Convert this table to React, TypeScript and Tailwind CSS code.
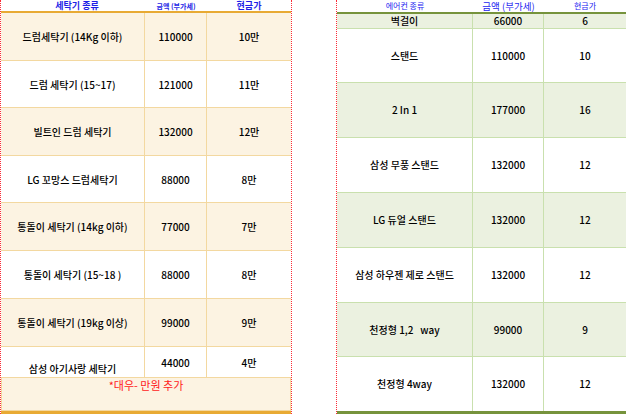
import React from 'react';

const WASHERS = [
  { name: '드럼세탁기 (14Kg 이하)', price: '110000', cash: '10만', h: 'h-[48px]' },
  { name: '드럼 세탁기 (15~17)', price: '121000', cash: '11만', h: 'h-[47px]' },
  { name: '빌트인 드럼 세탁기', price: '132000', cash: '12만', h: 'h-[48px]' },
  { name: 'LG 꼬망스 드럼세탁기', price: '88000', cash: '8만', h: 'h-[47px]' },
  { name: '통돌이 세탁기 (14kg 이하)', price: '77000', cash: '7만', h: 'h-[48px]' },
  { name: '통돌이 세탁기 (15~18 )', price: '88000', cash: '8만', h: 'h-[48px]' },
  { name: '통돌이 세탁기 (19kg 이상)', price: '99000', cash: '9만', h: 'h-[48px]' },
];

const AIRCONS = [
  { name: '벽걸이', price: '66000', cash: '6', h: 'h-[15px]' },
  { name: '스탠드', price: '110000', cash: '10', h: 'h-[54px]' },
  { name: '2 In 1', price: '177000', cash: '16', h: 'h-[55px]' },
  { name: '삼성 무풍 스탠드', price: '132000', cash: '12', h: 'h-[55px]' },
  { name: 'LG 듀얼 스탠드', price: '132000', cash: '12', h: 'h-[55px]' },
  { name: '삼성 하우젠 제로 스탠드', price: '132000', cash: '12', h: 'h-[55px]' },
  { name: '천정형 1,2   way', price: '99000', cash: '9', h: 'h-[54px]' },
  { name: '천정형 4way', price: '132000', cash: '12', h: 'h-[54px]' },
];

const font = { fontFamily: '"Noto Sans CJK KR", "Noto Sans", sans-serif' };

export default function App() {
  return (
    <div className="w-[626px] h-[414px] bg-white overflow-hidden flex text-black" style={font}>
      {/* 세탁기 */}
      <div className="w-[292px] h-full flex flex-col border-x border-dotted border-red-500">
        <div className="h-[11px] grid grid-cols-[144px_62px_1fr] items-end text-[#1f1fe6] font-bold leading-[10px]">
          <div className="text-center text-[9px] pl-2">세탁기 종류</div>
          <div className="text-center text-[7px]">금액 (부가세)</div>
          <div className="text-center text-[9px]">현금가</div>
        </div>
        <div className="h-[2px] bg-[#e8aa34]" />
        {WASHERS.map((r, i) => (
          <div
            key={r.name}
            className={`${r.h} grid grid-cols-[144px_62px_1fr] border-b border-[#f3d8a0] text-[10px] font-medium ${i % 2 === 0 ? 'bg-[#fcf3e2]' : 'bg-white'}`}
          >
            <div className="flex items-center justify-center border-r border-[#f3d8a0]">{r.name}</div>
            <div className="flex items-center justify-center border-r border-[#f3d8a0]">{r.price}</div>
            <div className="flex items-center justify-center">{r.cash}</div>
          </div>
        ))}
        <div className="h-[30px] grid grid-cols-[144px_62px_1fr] text-[10px] font-medium bg-white overflow-hidden">
          <div className="flex justify-center pt-[17px] border-r border-[#f3d8a0] leading-none">삼성 아기사랑 세탁기</div>
          <div className="flex items-center justify-center border-r border-[#f3d8a0]">44000</div>
          <div className="flex items-center justify-center">4만</div>
        </div>
        <div className="h-[34px] bg-[#fcf3e2] border border-[#f3d8a0] flex justify-center pt-[1px] text-[11px] text-[#ff1a1a] leading-tight">
          *대우- 만원 추가
        </div>
        <div className="h-[3px] bg-[#e8aa34]" />
      </div>

      {/* 에어컨 */}
      <div className="ml-[44px] flex-1 h-full flex flex-col border-l border-dotted border-red-500">
        <div className="h-[12px] grid grid-cols-[136px_71px_1fr] items-end text-[#2424f0] leading-[12px]">
          <div className="text-center text-[8px]">에어컨 종류</div>
          <div className="text-center text-[9.5px]">금액 (부가세)</div>
          <div className="text-center text-[8px]">현금가</div>
        </div>
        <div className="h-[2px] bg-[#76933c]" />
        {AIRCONS.map((r, i) => (
          <div
            key={r.name}
            className={`${r.h} grid grid-cols-[136px_71px_1fr] border-b border-[#c9e0ae] text-[10px] font-medium leading-none ${i % 2 === 0 ? 'bg-[#ebf1e0]' : 'bg-white'} ${i === AIRCONS.length - 1 ? 'border-b-0' : ''}`}
          >
            <div className="flex items-center justify-center border-r border-[#c9e0ae] whitespace-pre">{r.name}</div>
            <div className="flex items-center justify-center border-r border-[#c9e0ae]">{r.price}</div>
            <div className="flex items-center justify-center">{r.cash}</div>
          </div>
        ))}
        <div className="h-[3px] bg-[#76933c]" />
      </div>
    </div>
  );
}
